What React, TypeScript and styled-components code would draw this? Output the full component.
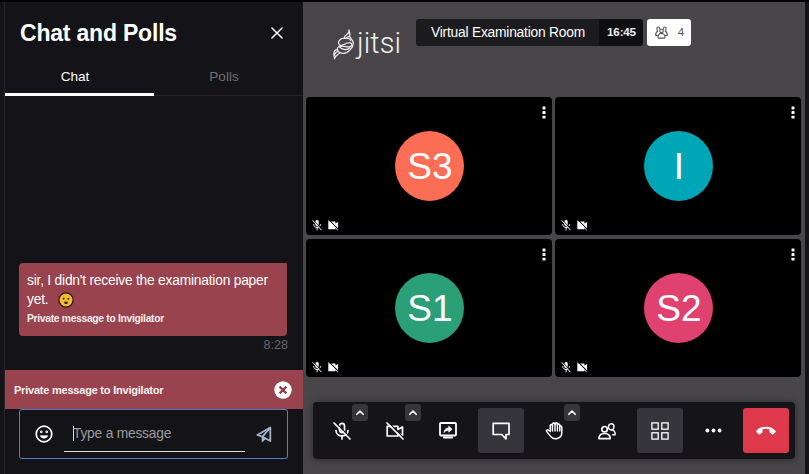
import React from "react";
import styled, { createGlobalStyle, css } from "styled-components";

const GlobalStyle = createGlobalStyle`
  * { box-sizing: border-box; }
  body { margin: 0; background: #141418; overflow: hidden; }
  button { border: 0; padding: 0; background: none; color: inherit; font: inherit; letter-spacing: inherit; }
  svg { display: block; flex: none; overflow: visible; }
`;

const Page = styled.div`
  width: 809px;
  height: 474px;
  display: flex;
  border-top: 2px solid #000;
  background: #141316;
  color: #fff;
  font-family: "Liberation Sans", Arial, sans-serif;
  font-size: 13.8px;
  letter-spacing: -0.22px;
`;

/* ---------- chat panel ---------- */

const ChatPanel = styled.aside`
  width: 299px;
  margin-left: 4px;
  border-left: 1px solid #242429;
  background: #141418;
  display: flex;
  flex-direction: column;
`;

const PanelHeader = styled.header`
  height: 60px;
  padding: 1px 20px 0 15px;
  display: flex;
  align-items: center;
  justify-content: space-between;
`;

const Title = styled.h1`
  margin: 0;
  font-size: 23px;
  letter-spacing: -0.2px;
  line-height: 28px;
  font-weight: 700;
`;

const Tabs = styled.nav`
  display: flex;
  height: 34px;
`;

const Tab = styled.button<{ $active?: boolean }>`
  width: 149px;
  height: 34px;
  padding-right: 9px;
  padding-bottom: ${(p) => (p.$active ? 3 : 5)}px;
  font-size: 13.6px;
  letter-spacing: 0;
  color: ${(p) => (p.$active ? "#fff" : "#6f6f74")};
  border-bottom: ${(p) => (p.$active ? "3px solid #fff" : "1px solid #242428")};
`;

const Messages = styled.div`
  flex: 1;
  padding: 0 15px 15px 14px;
  display: flex;
  flex-direction: column;
  justify-content: flex-end;
`;

const Bubble = styled.div`
  width: 268px;
  height: 73px;
  padding: 8px 8px 0;
  border-radius: 4px 1px 4px 4px;
  background: #98434d;
`;

const MessageText = styled.p`
  margin: 0;
  line-height: 19px;
  svg { display: inline-block; vertical-align: -4px; margin-left: 6px; }
`;

const PrivateNote = styled.div`
  font-size: 10.3px;
  letter-spacing: -0.3px;
  line-height: 20px;
  font-weight: 700;
  color: #f7eeee;
`;

const SentAt = styled.time`
  align-self: flex-end;
  font-size: 12.6px;
  letter-spacing: 0;
  line-height: 19px;
  color: #66666b;
`;

const Recipient = styled.div`
  height: 39px;
  padding: 0 11px 0 9px;
  display: flex;
  align-items: center;
  justify-content: space-between;
  background: #98434d;
  font-size: 11px;
  font-weight: 700;
  color: #faf2f2;
`;

const Composer = styled.div`
  height: 50px;
  margin: 0 15px 15px 14px;
  padding: 0 15px 0 15px;
  display: flex;
  align-items: center;
  border: 1px solid #5281c0;
  border-radius: 3px;
`;

const Field = styled.div`
  width: 181px;
  height: 36px;
  margin: 0 11px 0 11px;
  padding: 0 0 0 9px;
  display: flex;
  align-items: center;
  border-bottom: 1px solid #dedede;
  color: #9b9b9e;
`;

const Caret = styled.span`
  width: 1px;
  height: 15px;
  margin-right: -1px;
  background: #ddd;
`;

/* ---------- conference ---------- */

const Stage = styled.main`
  width: 502px;
  background: #484648;
  display: flex;
  flex-direction: column;
`;

const TopBar = styled.header`
  height: 95px;
  padding: 17px 0 0 30px;
  display: flex;
  align-items: flex-start;
`;

const Brand = styled.div`
  width: 83px;
  padding-top: 5px;
  display: flex;
  svg { margin: 5px 2px 0 0; }
`;

const BrandName = styled.span`
  font-family: Roboto, sans-serif;
  font-weight: 300;
  font-size: 29px;
  letter-spacing: 0.1px;
  line-height: 38px;
  color: #f1f1f1;
`;

const Chip = styled.div`
  display: flex;
  height: 27px;
  border-radius: 3px;
  overflow: hidden;
`;

const RoomName = styled.div`
  width: 183px;
  line-height: 27px;
  padding-left: 1px;
  text-align: center;
  background: #1c1b1d;
`;

const Clock = styled.div`
  width: 44px;
  line-height: 26px;
  padding-left: 1px;
  text-align: center;
  font-size: 11.7px;
  font-weight: 700;
  color: #f0f0f0;
  background: #0f0e11;
`;

const Count = styled(Chip)`
  width: 44px;
  margin-left: 4px;
  padding: 0 7px 1px 8px;
  align-items: center;
  justify-content: space-between;
  background: #fff;
  color: #555;
  font-size: 11.5px;
`;

const Grid = styled.div`
  display: grid;
  grid-template-columns: 246px 246px;
  grid-template-rows: 138px 138px;
  gap: 4px 3px;
  padding-left: 3px;
`;

const TileBox = styled.section`
  display: grid;
  grid-template-rows: 34px 70px 34px;
  justify-items: center;
  border-radius: 4px;
  background: #000;
`;

const TileMenu = styled.button`
  justify-self: end;
  align-self: start;
  margin: 9px 6px 0 0;
`;

const Avatar = styled.div<{ $color: string }>`
  width: 69px;
  height: 70px;
  margin-left: 1px;
  border-radius: 50%;
  background: ${(p) => p.$color};
  font-size: 37px;
  letter-spacing: 0;
  line-height: 71px;
  text-indent: 1px;
  text-align: center;
`;

const Status = styled.div`
  justify-self: start;
  align-self: end;
  display: flex;
  gap: 4px;
  padding: 0 0 4px 5px;
`;

const Toolbar = styled.footer`
  width: 482px;
  height: 57px;
  margin: 25px 0 0 10px;
  padding: 6px 5px 0 6px;
  display: flex;
  gap: 7px;
  border-radius: 4px;
  background: #141419;
  box-shadow: 0 1px 7px rgba(15, 15, 20, 0.5);
`;

const Tool = styled.button<{ $tone?: "active" | "danger" }>`
  position: relative;
  width: 46px;
  height: 45px;
  display: flex;
  align-items: center;
  justify-content: center;
  border-radius: 3px;
  ${(p) => p.$tone === "active" && css`background: #36353b;`}
  ${(p) => p.$tone === "danger" && css`background: #de384b;`}
`;

const Expand = styled.span`
  position: absolute;
  top: -4px;
  right: -3px;
  width: 16px;
  height: 17px;
  display: flex;
  align-items: center;
  justify-content: center;
  border-radius: 3px;
  background: #37363b;
`;

/* ---------- icons ---------- */

const line = {
  fill: "none",
  stroke: "currentColor",
  strokeLinecap: "round" as const,
  strokeLinejoin: "round" as const,
};

const CloseIcon = () => (
  <svg width="12" height="12" viewBox="0 0 13 13" {...line} strokeWidth="1.6">
    <path d="M1 1l11 11M12 1L1 12" />
  </svg>
);

const WorriedFace = () => (
  <svg width="16" height="16" viewBox="0 0 16 16">
    <circle cx="8" cy="8" r="7.1" fill="#f7bd30" stroke="#24190f" strokeWidth="1.2" />
    <circle cx="5.6" cy="6.8" r="1" fill="#382313" />
    <circle cx="10.4" cy="6.8" r="1" fill="#382313" />
    <ellipse cx="8" cy="10.7" rx="1.9" ry="1.2" fill="#382313" />
  </svg>
);

const ClearIcon = () => (
  <svg width="18" height="18" viewBox="0 0 18 18">
    <circle cx="9" cy="9" r="8.7" fill="#fff" />
    <path d="M5.6 5.6l6.8 6.8M12.4 5.6l-6.8 6.8" stroke="#8f3e49" strokeWidth="2.2" />
  </svg>
);

const SmileIcon = () => (
  <svg width="18" height="18" viewBox="0 0 18 18" {...line} strokeWidth="1.7">
    <circle cx="9" cy="9" r="7.8" />
    <path d="M5.3 11c1.6 3 5.8 3 7.4 0z" fill="currentColor" strokeWidth=".7" />
    <circle cx="6.3" cy="6.8" r=".5" />
    <circle cx="11.7" cy="6.8" r=".5" />
  </svg>
);

const SendIcon = () => (
  <svg width="16" height="17" viewBox="0 0 16 17" fill="none" stroke="#a3b1c9" strokeWidth="1.8" strokeLinejoin="round">
    <path d="M14.3 1.5v13.5L9.2 12.2 6.5 15v-4.3L1.3 9z" />
    <path d="M14 1.8L6.5 10.7l2.7 1.5" />
    <path d="M6.5 10.7l2.7 1.5L6.5 15z" fill="#a3b1c9" strokeWidth=".5" />
  </svg>
);

const JitsiMark = () => (
  <svg width="22" height="31" viewBox="0 0 22 31" fill="none" stroke="#f1f1f1" strokeWidth="1.2" strokeLinecap="round" strokeLinejoin="round">
    <path d="M16 .8c.4 2.2-.4 3.3-1.9 4.4-1.7 1.2-3 2.1-2.8 3.9M16 .8c0 2 1.4 3.5.9 5.3-.5 1.7-2.3 2.3-4.3 3.1" />
    <path d="M11.3 9.1c-3.2 0-5.8 2.100-5.700 4.700 0 2 1.500 2.900 3.400 2.500 3-.6 4.900-3.400 8.300-2.400 2 .6 2.100 2.600.3 3.500-3.300 1.600-6.600-1.200-11.200.2" />
    <path d="M16.800 7.300c-.2 2 3.400 3 3.500 6.900 0 3.200-1.700 4.900-3.300 6.700-2 2.400-4.300 3.600-7.200 3.400-3.400-.3-5.500-2.300-5.400-4.500.1-1.300.8-2 2-2.300" />
    <path d="M11.800 9.500c2.600-.7 5 .1 6 2M6.400 17.600c2 2.700 6.600 4.400 10.500 1.200M4.500 20.600c-2.400.1-3.600 1.500-3.600 3.900 0 2 .3 3.400.6 5.200.8-2.200 1.900-3.500 3.500-4.400.9-.5 1.400-.8 1.900-1.600M1.500 26.300c.5-2.400 1.800-3.700 4-3.800" />
  </svg>
);

const CrowdIcon = () => (
  <svg width="13" height="13" viewBox="0 0 13 13" {...line} strokeWidth="1.1">
    <circle cx="6.5" cy="4.9" r="1.7" />
    <path d="M3.3 12.1C2.4 9.3 4 7.4 6.5 7.4S10.6 9.3 9.7 12.1z" />
    <path d="M4.7 3.1C5.4 .2 1.7.3 1.9 3c.1 1 .4 1.6.9 2C1 6.2.4 7.5.7 9.4h1.6M8.3 3.1C7.6.2 11.3.3 11.1 3c-.1 1-.4 1.6-.9 2 1.8 1.2 2.4 2.5 2.1 4.4h-1.6" />
  </svg>
);

const KebabIcon = () => (
  <svg width="4" height="13" viewBox="0 0 4 13" fill="#fff">
    <rect x=".5" y=".5" width="3" height="2.9" rx=".6" />
    <rect x=".5" y="5.1" width="3" height="2.9" rx=".6" />
    <rect x=".5" y="9.7" width="3" height="2.9" rx=".6" />
  </svg>
);

const TileMicOff = () => (
  <svg width="12" height="12" viewBox="0 0 12 12" {...line} strokeWidth="1">
    <rect x="4.6" y="1.2" width="2.9" height="5.6" rx="1.4" fill="currentColor" strokeWidth=".4" />
    <path d="M2.7 5.6c.2 4 6.600 4 6.800 0M6.100 8.700v2.200" />
    <path d="M2.7 1.3l8.3 8.7" stroke="#000" strokeWidth=".9" />
    <path d="M1.9 1.6l8.3 9.3" />
  </svg>
);

const TileCamOff = () => (
  <svg width="12" height="12" viewBox="0 0 12 12">
    <path d="M1.3 2.6h7.1v1.900l2.700-1.500v6.400L8.400 8v2.300H1.300z" fill="#fff" />
    <path d="M2.300 1.400l9.400 9.200" stroke="#000" strokeWidth="1.100" />
    <path d="M1.200 1.700l9.600 9.400" stroke="#fff" strokeWidth="1" />
  </svg>
);

const ChevronUp = () => (
  <svg width="8" height="5" viewBox="0 0 8 5" {...line} strokeWidth="1.6">
    <path d="M.8 4.3L4 1.1l3.2 3.2" />
  </svg>
);

const MicOff = () => (
  <svg width="18" height="18" viewBox="0 0 18 18" {...line} strokeWidth="1.7">
    <rect x="6.5" y="1.3" width="5" height="9.3" rx="2.5" />
    <path d="M3 8.5c.2 7.2 11.8 7.2 12 0M9 14v3" />
    <path d="M2.4 .3l15.5 15.5" stroke="#141419" strokeWidth="1.2" />
    <path d="M1 1l16 16" />
  </svg>
);

const CamOff = () => (
  <svg width="18" height="18" viewBox="0 0 18 18" {...line} strokeWidth="1.7">
    <path d="M1.2 4.3h10.7v3.2l4.6-2.6v8.6l-4.6-2.6V14H1.2z" />
    <path d="M2.4 .3l15.5 15.5" stroke="#141419" strokeWidth="1.2" />
    <path d="M1 1l16 16" />
  </svg>
);

const ShareScreen = () => (
  <svg width="18" height="17" viewBox="0 0 18 17" {...line} strokeWidth="1.8">
    <rect x="1" y="1" width="16" height="12.5" rx="1" />
    <path d="M5 10.5c.2-3.3 2-4.5 4.6-4.6V4l3.6 3.2-3.6 3.1V8.5c-2 0-3.3.5-4.6 2z" fill="currentColor" strokeWidth=".5" />
    <path d="M5 15.5h8" strokeWidth="2" />
  </svg>
);

const ChatIcon = () => (
  <svg width="18" height="18" viewBox="0 0 18 18" {...line} strokeWidth="1.7">
    <path d="M1.2 1.3h15.8v11.2h-3v4.3l-4.3-4.3H1.2z" />
  </svg>
);

const HandIcon = () => (
  <svg width="17" height="19" viewBox="0 0 18 19" {...line} strokeWidth="1.6">
    <path d="M4.5 10.5V4.3c0-1.7 2.3-1.7 2.3 0V3c0-1.9 2.7-1.9 2.7 0v-.5c0-1.7 2.6-1.7 2.6 0v1.3c0-1.7 2.5-1.6 2.5 0v2c0-1.5 2.1-1.4 2.1.2v6c0 6.8-8.5 8-11.9 3.7l-4-5c-1-1.5.8-2.5 2-1.3z" />
    <path d="M6.8 4v6M9.5 3v7M12.1 3v7M14.6 5v5" strokeWidth="1.5" />
  </svg>
);

const PeopleIcon = () => (
  <svg width="18" height="18" viewBox="0 0 18 18" {...line} strokeWidth="1.7">
    <circle cx="6.6" cy="7.2" r="2.7" />
    <path d="M1 16.7h11.2c.3-3.3-1.9-5.2-5.6-5.2S.7 13.4 1 16.7z" />
    <path d="M13.5 8.1c-1.2 0-2.5-.8-2.9-2.2-.5-2.3.8-4.2 2.7-4.2s3.1 1.7 2.6 3.7c-.3 1.6-1.2 2.6-2.4 2.7zM13.5 8.1c2.7.2 3.9 1.7 3.6 4.6h-2.4" strokeWidth="1.5" />
  </svg>
);

const TileView = () => (
  <svg width="18" height="18" viewBox="0 0 18 18" fill="none" stroke="currentColor" strokeWidth="1.3">
    <rect x=".9" y=".9" width="6.3" height="6.3" />
    <rect x="10.8" y=".9" width="6.3" height="6.3" />
    <rect x=".9" y="10.8" width="6.3" height="6.3" />
    <rect x="10.8" y="10.8" width="6.3" height="6.3" />
  </svg>
);

const MoreIcon = () => (
  <svg width="17" height="5" viewBox="0 0 17 5" fill="currentColor">
    <circle cx="2.4" cy="2.5" r="1.9" />
    <circle cx="8.5" cy="2.5" r="1.9" />
    <circle cx="14.6" cy="2.5" r="1.9" />
  </svg>
);

const HangUp = () => (
  <svg width="20" height="9" viewBox="0 0 20 9" fill="currentColor">
    <path d="M.4 5C4.5-.8 15.500-.8 19.600 5c.3.500.2.900-.2 1.300l-1.700 1.800c-.5.500-1 .5-1.500.1L14 6.700c-.4-.3-.5-.6-.5-1V3.300c-2-.7-5-.7-7 0v2.400c0 .4-.1.700-.5 1L3.800 8.200c-.5.400-1 .4-1.500-.1L.6 6.300C.2 5.900.1 5.500.4 5z" />
  </svg>
);

const participants = [
  { initials: "S3", color: "#fb6d55" },
  { initials: "I", color: "#00a6b6" },
  { initials: "S1", color: "#2b9f77" },
  { initials: "S2", color: "#df426f" },
];

type ToolItem = {
  label: string;
  icon: React.ReactNode;
  tone?: "active" | "danger";
  expandable?: boolean;
};

const tools: ToolItem[] = [
  { label: "Unmute", icon: <MicOff />, expandable: true },
  { label: "Start camera", icon: <CamOff />, expandable: true },
  { label: "Share screen", icon: <ShareScreen /> },
  { label: "Chat", icon: <ChatIcon />, tone: "active" },
  { label: "Raise hand", icon: <HandIcon />, expandable: true },
  { label: "Participants", icon: <PeopleIcon /> },
  { label: "Tile view", icon: <TileView />, tone: "active" },
  { label: "More", icon: <MoreIcon /> },
  { label: "Leave", icon: <HangUp />, tone: "danger" },
];

export default function App() {
  return (
    <Page>
      <GlobalStyle />
      <ChatPanel>
        <PanelHeader>
          <Title>Chat and Polls</Title>
          <button aria-label="Close"><CloseIcon /></button>
        </PanelHeader>
        <Tabs>
          <Tab $active>Chat</Tab>
          <Tab>Polls</Tab>
        </Tabs>
        <Messages>
          <Bubble>
            <MessageText>
              sir, I didn't receive the examination paper yet. <WorriedFace />
            </MessageText>
            <PrivateNote>Private message to Invigilator</PrivateNote>
          </Bubble>
          <SentAt>8:28</SentAt>
        </Messages>
        <Recipient>
          Private message to Invigilator
          <button aria-label="Cancel private message"><ClearIcon /></button>
        </Recipient>
        <Composer>
          <SmileIcon />
          <Field><Caret />Type a message</Field>
          <SendIcon />
        </Composer>
      </ChatPanel>
      <Stage>
        <TopBar>
          <Brand>
            <JitsiMark />
            <BrandName>jitsi</BrandName>
          </Brand>
          <Chip>
            <RoomName>Virtual Examination Room</RoomName>
            <Clock>16:45</Clock>
          </Chip>
          <Count><CrowdIcon />4</Count>
        </TopBar>
        <Grid>
          {participants.map((p) => (
            <TileBox key={p.initials}>
              <TileMenu aria-label="Options"><KebabIcon /></TileMenu>
              <Avatar $color={p.color}>{p.initials}</Avatar>
              <Status><TileMicOff /><TileCamOff /></Status>
            </TileBox>
          ))}
        </Grid>
        <Toolbar>
          {tools.map((t) => (
            <Tool key={t.label} $tone={t.tone} aria-label={t.label}>
              {t.icon}
              {t.expandable && <Expand><ChevronUp /></Expand>}
            </Tool>
          ))}
        </Toolbar>
      </Stage>
    </Page>
  );
}
